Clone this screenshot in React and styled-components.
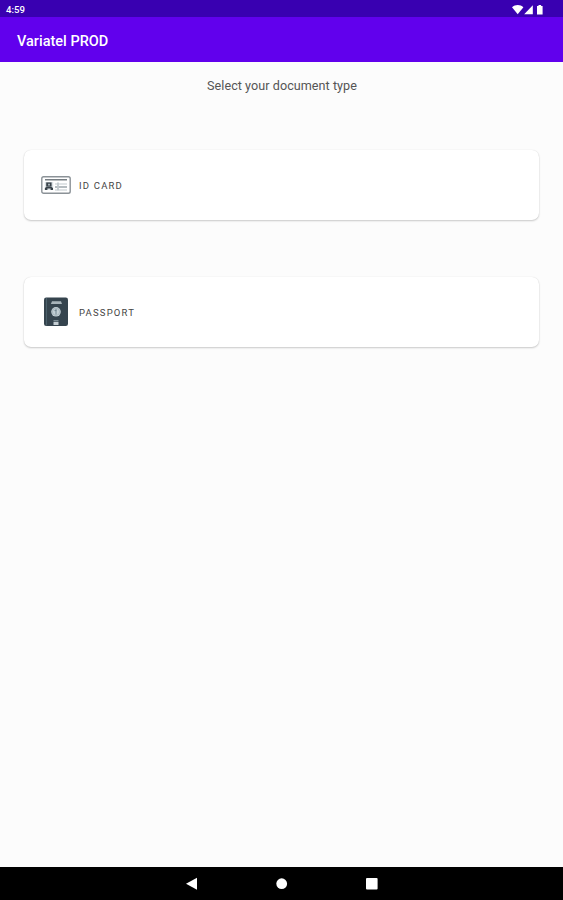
import React from 'react';
import styled, { createGlobalStyle } from 'styled-components';

const documents = [
  { label: 'ID CARD', Icon: IdCardIcon },
  { label: 'PASSPORT', Icon: PassportIcon },
];

function IdCardIcon() {
  return (
    <svg width="30" height="30" viewBox="0 0 30 30" fill="none">
      <rect x="0.8" y="6.8" width="28.4" height="16.4" rx="1.8" fill="#fff" stroke="#8b9297" strokeWidth="1.4" />
      <path d="M4 9.8h22" stroke="#555e64" strokeWidth="1.2" />
      <path d="M3.8 12h8.4v8H3.8z" fill="#dce2e5" />
      <path d="M5.2 12.4h5.4v4.2H5.2z" fill="#39434a" />
      <path d="M7 13.7h2v1.7H7z" fill="#a9b2b7" />
      <path d="M3.9 20v-2l1.8-1.3h4.5L12 18v2H9.6v-1.6H6.4V20z" fill="#39434a" />
      <path d="M14 14h12M14 20h12" stroke="#c1c9cd" strokeWidth="1.1" />
      <path d="M14 17h12" stroke="#8e999f" strokeWidth="1.3" />
      <path d="M17 12.5v7.8" stroke="#c3cace" strokeWidth="1.8" />
    </svg>
  );
}

function PassportIcon() {
  return (
    <svg width="30" height="30" viewBox="0 0 30 30" fill="none">
      <rect x="3" y="0.5" width="24" height="28.5" rx="2.2" fill="#35444e" />
      <path d="M5.5 1v27.5" stroke="#4b606b" strokeWidth="1" />
      <path d="M11 4.2h9l1 2.8H9.8z" fill="#a8b4ba" />
      <circle cx="15" cy="14.8" r="4.8" fill="#c3cfd5" />
      <circle cx="15" cy="14.8" r="3.6" stroke="#a0afb6" strokeWidth="0.8" />
      <path d="M15 12v5.6M13.5 13.6h2" stroke="#718590" strokeWidth="1" />
      <rect x="12.5" y="23" width="5" height="1.5" fill="#7c8c94" />
      <rect x="12.5" y="25" width="5" height="3" fill="#c5ced3" />
    </svg>
  );
}

const StatusIcons = () => (
  <svg width="34" height="12" viewBox="0 0 34 12" fill="#fff">
    <path d="M0 3.2C3.2.4 8.3.4 11.4 3.2L5.7 10.2z" />
    <path d="M20.8 1.2v9h-8.6z" />
    <path d="M25 1.9h1.5V1h2.6v.9h1.5v8.5H25z" />
  </svg>
);

const App = () => {
  return (
    <StyledScreen>
      <GlobalStyle />
      <StyledStatusBar>
        <StyledTime>4:59</StyledTime>
        <StatusIcons />
      </StyledStatusBar>
      <StyledAppBar>Variatel PROD</StyledAppBar>
      <StyledContent>
        <StyledPrompt>Select your document type</StyledPrompt>
        <StyledDocumentList>
          {documents.map(({ label, Icon }) => (
            <StyledCard key={label}>
              <Icon />
              <StyledLabel>{label}</StyledLabel>
            </StyledCard>
          ))}
        </StyledDocumentList>
      </StyledContent>
      <StyledNavBar>
        <StyledNavButton aria-label="Back">
          <svg width="12" height="14" viewBox="0 0 12 14"><path d="M0 6.7 11 .8v12z" fill="#fff" /></svg>
        </StyledNavButton>
        <StyledNavButton aria-label="Home">
          <svg width="12" height="12" viewBox="0 0 12 12"><circle cx="5.7" cy="5.7" r="5.4" fill="#fff" /></svg>
        </StyledNavButton>
        <StyledNavButton aria-label="Overview">
          <svg width="12" height="12" viewBox="0 0 12 12"><rect width="11.6" height="11.6" rx="1" fill="#fff" /></svg>
        </StyledNavButton>
      </StyledNavBar>
    </StyledScreen>
  );
};

const GlobalStyle = createGlobalStyle`
  * {
    box-sizing: border-box;
  }

  body {
    margin: 0;
    font-family: Roboto, sans-serif;
  }

  svg {
    display: block;
    flex-shrink: 0;
  }
`;

const StyledScreen = styled.div`
  height: 100vh;
  display: flex;
  flex-direction: column;
  background: #fcfcfc;
`;

const StyledStatusBar = styled.div`
  height: 17px;
  padding: 2px 17px 0 6px;
  display: flex;
  justify-content: space-between;
  align-items: center;
  background: #3900b1;
  color: #fff;
`;

const StyledTime = styled.span`
  font-size: 9.6px;
  font-weight: 500;
  line-height: 12px;
`;

const StyledAppBar = styled.header`
  height: 45px;
  padding: 4px 17px 0;
  display: flex;
  align-items: center;
  background: #6100ed;
  color: #fff;
  font-size: 14.5px;
  font-weight: 500;
`;

const StyledContent = styled.main`
  flex: 1;
  padding: 16px 24px 0;
`;

const StyledPrompt = styled.div`
  height: 16px;
  padding-left: 1px;
  color: #555;
  font-size: 12.6px;
  line-height: 16px;
  letter-spacing: 0.05px;
  text-align: center;
`;

const StyledDocumentList = styled.div`
  margin-top: 56px;
  display: flex;
  flex-direction: column;
  gap: 57px;
`;

const StyledCard = styled.button`
  width: 100%;
  height: 70px;
  padding: 0 17px;
  display: flex;
  align-items: center;
  gap: 8px;
  border: 0;
  border-radius: 7px;
  background: #fff;
  box-shadow: 0 1px 2px rgba(0, 0, 0, 0.2), 0 0 1px rgba(0, 0, 0, 0.12);
  font-family: inherit;
  text-align: left;
`;

const StyledLabel = styled.span`
  padding-top: 1px;
  color: #444;
  font-size: 9.5px;
  line-height: 12px;
  letter-spacing: 1.2px;
`;

const StyledNavBar = styled.nav`
  height: 33px;
  display: flex;
  justify-content: center;
  align-items: center;
  background: #000;
`;

const StyledNavButton = styled.button`
  width: 90px;
  height: 33px;
  padding: 0;
  display: flex;
  justify-content: center;
  align-items: center;
  border: 0;
  background: none;
`;

export default App;
